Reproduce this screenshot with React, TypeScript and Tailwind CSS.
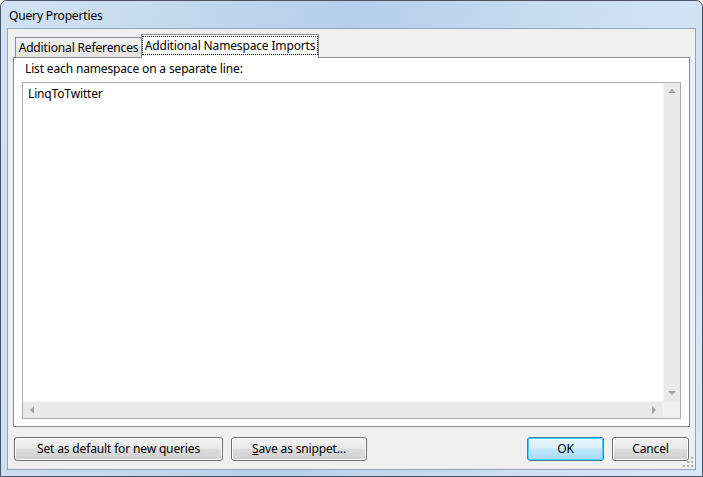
import React from 'react';

const font = { fontFamily: '"Noto Sans", "Open Sans", sans-serif' };

const DialogButton: React.FC<{ width: string; isDefault?: boolean; children: React.ReactNode }> = ({
  width,
  isDefault = false,
  children,
}) => (
  <div
    className={`${width} h-[24px] rounded-[3px] border flex items-center justify-center whitespace-nowrap text-[12px] text-black ${
      isDefault
        ? 'border-[#3c7fb1] shadow-[inset_0_0_0_1px_#48d0ff] bg-[linear-gradient(#eaf6fd_0%,#d9f0fc_45%,#bee6fd_50%,#a7d9f5_100%)]'
        : 'border-[#707070] shadow-[inset_0_0_0_1px_#fcfcfc] bg-[linear-gradient(#f2f2f2_0%,#ebebeb_45%,#dddddd_50%,#cfcfcf_100%)]'
    }`}
  >
    {children}
  </div>
);

const Arrow: React.FC<{ dir: 'up' | 'down' | 'left' | 'right' }> = ({ dir }) => {
  const pts = {
    up: '0,4 4,0 8,4',
    down: '0,0 4,4 8,0',
    left: '4,0 0,4 4,8',
    right: '0,0 4,4 0,8',
  }[dir];
  const vertical = dir === 'up' || dir === 'down';
  return (
    <svg width={vertical ? 8 : 4} height={vertical ? 4 : 8} viewBox={vertical ? '0 0 8 4' : '0 0 4 8'}>
      <polygon points={pts} fill="#a3a3a3" />
    </svg>
  );
};

export default function App() {
  return (
    <div className="w-[703px] h-[477px] overflow-hidden bg-white tracking-[-0.15px]" style={font}>
      <div className="w-[703px] h-[477px] flex flex-col rounded-t-[7px] border border-[#4b5566] bg-[linear-gradient(100deg,#d3e3f4_0%,#c3d8ee_25%,#b5cfea_45%,#c8dcf1_70%,#d9e8f7_100%)] px-[6px] pb-[6px]">
        {/* title bar */}
        <div className="h-[27px] flex items-center pl-[2px] pt-[2px] text-[12px] text-black shrink-0">
          Query Properties
        </div>

        {/* client area */}
        <div className="relative flex-1 bg-[#f0f0f0] border border-[#8ea4bd] flex flex-col px-[5px] pt-[6px]">
          {/* tabs */}
          <div className="h-[22px] flex items-end pl-[2px] shrink-0">
            <div className="h-[20px] w-[127px] border border-b-0 border-[#898c95] bg-[linear-gradient(#f2f2f2,#e3e3e3)] flex items-center justify-center whitespace-nowrap text-[12px] text-black">
              Additional References
            </div>
            <div className="relative z-10 h-[24px] -mb-[1px] -ml-[1px] w-[178px] border border-b-0 border-[#898c95] bg-white flex items-center justify-center pb-[2px] whitespace-nowrap text-[12px] text-black">
              <span className="border border-dotted border-black px-[2px] leading-[17px]">
                Additional Namespace Imports
              </span>
            </div>
          </div>

          {/* panel */}
          <div className="h-[370px] border border-[#898c95] bg-white flex flex-col px-[8px] shrink-0">
            <div className="h-[24px] flex items-end pl-[3px] pb-[4px] whitespace-nowrap text-[12px] text-black">
              List each namespace on a separate line:
            </div>
            <div className="h-[337px] border border-[#abadb3] flex flex-col">
              <div className="flex-1 flex min-h-0">
                <div className="flex-1 px-[5px] pt-[3px] text-[12px] text-black leading-[16px]">LinqToTwitter</div>
                <div className="w-[17px] bg-[#eaeaea] flex flex-col items-center justify-between py-[6px] border-l border-[#f4f4f4]">
                  <Arrow dir="up" />
                  <Arrow dir="down" />
                </div>
              </div>
              <div className="h-[17px] flex shrink-0">
                <div className="flex-1 bg-[#eaeaea] flex items-center justify-between px-[7px] border-t border-[#f4f4f4]">
                  <Arrow dir="left" />
                  <Arrow dir="right" />
                </div>
                <div className="w-[17px] bg-[#f0f0f0]" />
              </div>
            </div>
          </div>

          {/* buttons */}
          <div className="mt-[10px] flex items-center pl-[1px] pr-[1px]">
            <DialogButton width="w-[209px]">Set as default for new queries</DialogButton>
            <div className="ml-[8px]">
              <DialogButton width="w-[136px]">
                <span>
                  <span className="underline">S</span>ave as snippet...
                </span>
              </DialogButton>
            </div>
            <div className="ml-auto flex gap-[8px]">
              <DialogButton width="w-[77px]" isDefault>
                OK
              </DialogButton>
              <DialogButton width="w-[77px]">Cancel</DialogButton>
            </div>
          </div>

          {/* resize grip */}
          <svg className="absolute right-[2px] bottom-[2px]" width="10" height="10" viewBox="0 0 10 10">
            {[
              [8, 0],
              [8, 4],
              [4, 4],
              [8, 8],
              [4, 8],
              [0, 8],
            ].map(([x, y], i) => (
              <rect key={i} x={x} y={y} width="2" height="2" fill="#b0b0b0" />
            ))}
          </svg>
        </div>
      </div>
    </div>
  );
}
